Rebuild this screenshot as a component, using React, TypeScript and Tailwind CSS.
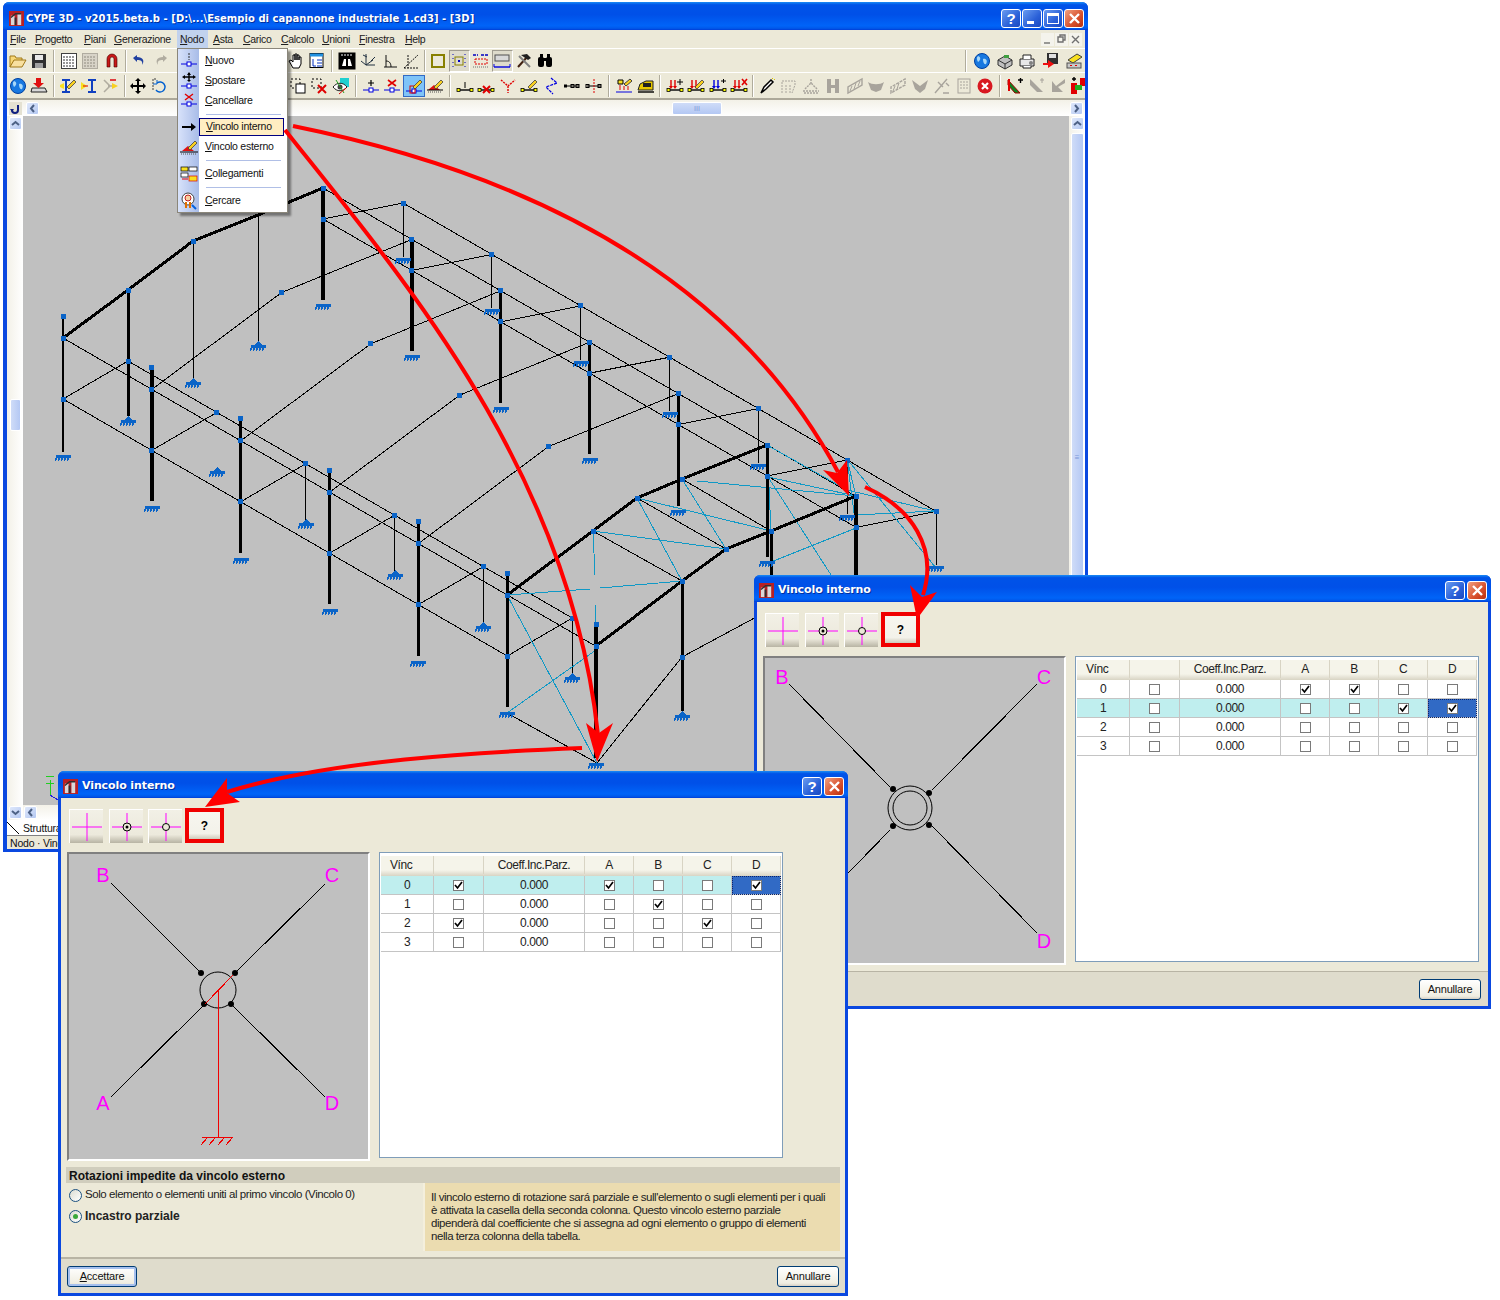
import React from 'react';

const XP = "bg-[linear-gradient(180deg,#1a8cf5_0%,#0053e8_10%,#0050e8_45%,#0064f8_85%,#0058ea_94%,#003dd7_100%)]";
const FONT = "font-['Liberation_Sans',Arial,sans-serif]";
const TITLEFONT = "font-['DejaVu_Sans',sans-serif]";

const Logo = () => (
  <svg width="15" height="15" viewBox="0 0 16 16" className="shrink-0">
    <rect width="16" height="16" fill="#b82024" />
    <rect x="2" y="5" width="4" height="10" fill="#d8d8d8" />
    <rect x="9" y="3" width="4" height="12" fill="#d8d8d8" />
    <path d="M2 7 L7 3 L13 3" stroke="#303030" strokeWidth="1.5" fill="none" />
    <rect x="6" y="7" width="2" height="8" fill="#303030" />
  </svg>
);

const TitleBtn = ({ kind }: { kind: 'help' | 'min' | 'max' | 'close' }) => (
  <div className={`w-[20px] h-[19px] rounded-[3px] border border-white flex items-center justify-center text-white font-bold text-[15px] leading-none ${kind === 'close' ? 'bg-[linear-gradient(135deg,#f0a080,#d8502c_60%,#b83010)]' : 'bg-[linear-gradient(135deg,#6a9cf0,#2a60d8_60%,#1a48c0)]'}`}>
    {kind === 'help' && <span>?</span>}
    {kind === 'min' && <div className="w-[7px] h-[3px] bg-white mt-[8px] mr-[3px]" />}
    {kind === 'max' && <div className="w-[12px] h-[11px] border border-white border-t-[3px]" />}
    {kind === 'close' && (
      <svg width="13" height="13" viewBox="0 0 13 13"><path d="M2 2 L11 11 M11 2 L2 11" stroke="#fff" strokeWidth="2.4" /></svg>
    )}
  </div>
);

/* ---------- toolbar icons ---------- */
const B = '#0000e0';
const nodeLine = (y = 13) => (
  <>
    <path d={`M1 ${y}H17`} stroke={B} strokeWidth="1" />
    <rect x="7" y={y - 2} width="4" height="4" fill="#fff" stroke={B} />
  </>
);
const barEnds = (
  <>
    <path d="M3 13H15" stroke="#000" strokeWidth="1.4" />
    <rect x="1" y="11.5" width="3" height="3" fill="#ff0" stroke="#000" strokeWidth="0.8" />
    <rect x="14" y="11.5" width="3" height="3" fill="#ff0" stroke="#000" strokeWidth="0.8" />
  </>
);
const pencil = <path d="M8 10 L15 3 L17 5 L10 12 Z" fill="#f8d020" stroke="#404040" strokeWidth="0.8" />;
const loads = (c = '#e00000') => (
  <>
    <path d="M5 3V10M9 3V10" stroke={c} strokeWidth="1.4" />
    <path d="M3 9L5 12L7 9M7 9L9 12L11 9" fill={c} />
    {barEnds}
  </>
);
const gray = '#a8a49c';
const icons: Record<string, React.ReactNode> = {
  folder: (<><path d="M1 15V4h5l1 2h6v3H5z" fill="#f8d878" stroke="#a07818" /><path d="M1 15L5 8h12l-4 7z" fill="#f8e0a0" stroke="#a07818" /></>),
  save: (<><rect x="2" y="2" width="14" height="14" fill="#303030" /><rect x="5" y="3" width="8" height="5" fill="#e8e8e8" /><rect x="5" y="11" width="8" height="5" fill="#a0a0a0" /></>),
  kkf: (<><rect x="1.5" y="1.5" width="15" height="15" fill="#fff" stroke="#404040" /><path d="M3 5H15M3 8H15M3 11H15M3 14H15" stroke="#303030" strokeDasharray="2 1" /></>),
  kkfGray: (<><rect x="1.5" y="1.5" width="15" height="15" fill="#d8d4c8" stroke="#b0aca0" /><path d="M3 5H15M3 8H15M3 11H15M3 14H15" stroke="#908c80" strokeDasharray="2 1" /></>),
  magnet: (<path d="M4 15V7a5 5 0 0 1 10 0V15H11V7a2 2 0 0 0-4 0V15Z" fill="#c81818" stroke="#400" strokeWidth="0.6" />),
  undo: <path d="M3 6 L7 3 V5 C13 5 15 9 12 13 C13 9 11 8 7 8 V10Z" fill="#2040a0" />,
  redo: <path d="M15 6 L11 3 V5 C5 5 3 9 6 13 C5 9 7 8 11 8 V10Z" fill="#b0aca0" />,
  hand: <path d="M6 16 L2 9 L4 8 L6 10 V3 H8 V8 V2 H10 V8 V3 H12 V8 V5 H14 V12 L12 16Z" fill="#fff" stroke="#000" strokeWidth="1" />,
  doc: (<><rect x="2" y="1.5" width="13" height="14" fill="#fff" stroke="#000" /><rect x="2" y="1.5" width="13" height="3" fill="#2090e0" /><path d="M5 7v7h3M9 8h5M9 11h5M9 14h5" stroke="#0030c0" fill="none" /></>),
  binGrid: (<><rect x="0.5" y="0.5" width="17" height="17" fill="#000" /><path d="M3 3H15" stroke="#fff" strokeDasharray="2 1" /><path d="M4 14L6 7H8V14ZM14 14L12 7H10V14Z" fill="#fff" /></>),
  axis: <path d="M7 2 L7 13 L2 9 M7 13 L16 13 M7 13 L14 8 M4 3 L8 5 M12 9L16 5" stroke="#203040" fill="none" />,
  angle: <path d="M3 15H16 M5 15V3 M5 9 C9 9 10 12 10 15" stroke="#101010" fill="none" />,
  dashAngle: <path d="M2 16 L16 3 M2 16H16 M6 3V16" stroke="#101010" strokeDasharray="2 1" fill="none" />,
  olive: <rect x="3" y="3" width="12" height="12" fill="none" stroke="#888000" strokeWidth="2" />,
  dotRect: (<><rect x="5" y="5" width="8" height="8" fill="none" stroke="#888000" /><rect x="8" y="8" width="2" height="2" fill="#0000c0" /><path d="M3 2V16M15 2V16" stroke="#0000c0" strokeDasharray="1 3" /></>),
  dashRed: (<><path d="M1 3H6 M9 3H17" stroke="#0000c0" strokeWidth="1.5" strokeDasharray="3 1" /><rect x="3" y="7" width="12" height="5" fill="none" stroke="#e00000" strokeDasharray="2 1" /><path d="M1 15H17" stroke="#707070" strokeDasharray="1 1" /></>),
  rectLine: (<><rect x="2" y="3" width="14" height="6" fill="#d8d8d8" stroke="#505050" /><path d="M1 15H17" stroke="#0000e0" strokeWidth="1.4" /><path d="M1 12V15M17 12V15" stroke="#0000e0" /></>),
  hammer: (<><path d="M3 15L13 4" stroke="#402010" strokeWidth="2" /><path d="M6 3L12 2L16 6L13 8Z" fill="#202020" /><path d="M4 4L15 15" stroke="#808080" strokeWidth="2" /></>),
  bino: (<><rect x="2" y="5" width="6" height="10" rx="2" fill="#000" /><rect x="10" y="5" width="6" height="10" rx="2" fill="#000" /><rect x="7" y="6" width="4" height="3" fill="#000" /><rect x="4" y="2" width="3" height="4" fill="#000" /><rect x="11" y="2" width="3" height="4" fill="#000" /></>),
  globe: (<><circle cx="9" cy="9" r="7.5" fill="#1878e0" stroke="#0040a0" /><path d="M5 4C8 5 8 8 5 10C4 8 3 6 5 4ZM10 7C13 6 15 9 13 12C11 13 10 10 10 7Z" fill="#a8d8f8" /></>),
  box: (<><path d="M2 8L9 4L16 8V13L9 17L2 13Z" fill="#c0c0c0" stroke="#303030" /><path d="M2 8L9 12L16 8M9 12V17" stroke="#303030" fill="none" /><rect x="8" y="3" width="5" height="3" fill="#40a040" /></>),
  printer: (<><path d="M2 7H16V14H2Z" fill="#e8e8e8" stroke="#202020" /><path d="M5 7V3H13V7M5 14V16H13V14" fill="#fff" stroke="#202020" /><circle cx="13" cy="11" r="2" fill="#808080" /></>),
  saveRed: (<><rect x="5" y="1" width="11" height="11" fill="#303030" /><rect x="7" y="2" width="7" height="4" fill="#e0e0e0" /><path d="M1 11H6V8L12 12L6 16V13H1Z" fill="#f01010" /></>),
  yellowBox: (<><path d="M3 8L12 2L17 5L8 11Z" fill="#f8e020" stroke="#404040" /><rect x="2" y="11" width="14" height="5" fill="#c8c8c8" stroke="#505050" /><path d="M5 13.5H7M10 13.5H12" stroke="#e00000" /></>),
  printDown: (<><path d="M2 11H15L17 15H1Z" fill="#d8d8d8" stroke="#202020" /><path d="M6 1H11V6H14L8.5 11L3 6H6Z" fill="#e01010" /></>),
  ibeamY: (<><path d="M3 3H11M3 15H11M7 3V15" stroke="#1040c0" strokeWidth="2" /><path d="M1 8L5 6V12L1 10Z" fill="#f8e020" />{pencil}</>),
  ibeamB: (<><path d="M8 3H16M8 15H16M12 3V15" stroke="#1040c0" strokeWidth="2" /><path d="M1 5L7 9L1 13Z" fill="#f8e020" /><path d="M3 9H8" stroke="#e00000" /></>),
  arrowsFaded: (<><path d="M2 3L8 9L2 15M6 9H14" stroke="#b0aca0" fill="none" strokeWidth="1.5" /><path d="M10 6L16 9L10 12Z" fill="#f8d020" /><path d="M8 3H14" stroke="#e04040" strokeWidth="2" /></>),
  move: <path d="M9 1L12 4H10V8H14V6L17 9L14 12V10H10V14H12L9 17L6 14H8V10H4V12L1 9L4 6V8H8V4H6Z" fill="#000" />,
  rotate: (<><path d="M5 2H2V14" stroke="#404040" fill="none" strokeDasharray="2 1" /><path d="M6 6A5 5 0 1 1 5 13" stroke="#0060d0" fill="none" strokeWidth="1.4" /><path d="M6 3V7H2" stroke="#0060d0" fill="none" /></>),
  dashRect: (<><rect x="2" y="2" width="9" height="9" fill="none" stroke="#000" strokeDasharray="2 2" /><rect x="7" y="7" width="9" height="9" fill="#fff" stroke="#000" /></>),
  dashX: (<><rect x="2" y="2" width="9" height="9" fill="none" stroke="#000" strokeDasharray="2 2" /><path d="M8 8L16 16M16 8L8 16" stroke="#e00000" strokeWidth="2" /></>),
  eye: (<><rect x="8" y="1" width="9" height="9" fill="#20d0d0" /><path d="M1 10C5 5 11 5 15 10C11 15 5 15 1 10Z" fill="#fff" stroke="#202020" /><circle cx="8" cy="10" r="2.5" fill="#404040" /><path d="M4 3L12 16" stroke="#20a020" /><path d="M7 17L14 11" stroke="#e00000" /></>),
  nodePlus: (<><path d="M9 3V9M6 6H12" stroke="#000" strokeWidth="1.2" />{nodeLine()}</>),
  nodeX: (<><path d="M5 3L13 9M13 3L5 9" stroke="#e00000" strokeWidth="1.6" />{nodeLine()}</>),
  nodePencil: (<>{nodeLine(14)}<rect x="5" y="9" width="5" height="7" fill="none" stroke="#e00000" />{pencil}</>),
  basePencil: (<><path d="M2 13L8 8L14 13Z" fill="#e01010" /><path d="M1 13H17" stroke="#000" /><path d="M2 15H16" stroke="#505050" strokeDasharray="1 1" />{pencil}</>),
  barNode: (<><path d="M9 5V11" stroke="#000" />{barEnds}</>),
  barX: (<>{barEnds}<path d="M6 9L13 16M13 9L6 16" stroke="#e00000" strokeWidth="2" /></>),
  redY: (<path d="M2 3L9 9L16 3M9 9V16" stroke="#e00000" fill="none" strokeDasharray="2 1" strokeWidth="1.4" />),
  barPencil: (<>{barEnds}{pencil}</>),
  blueZ: (<path d="M9 1L15 6L4 10L11 17" stroke="#0000e0" fill="none" strokeWidth="1.2" strokeDasharray="3 1" />),
  barDots: (<><path d="M2 9H16" stroke="#000" /><rect x="1" y="7.5" width="3" height="3" fill="#000" /><rect x="8" y="7.5" width="3" height="3" fill="none" stroke="#000" /><rect x="13" y="7.5" width="3" height="3" fill="none" stroke="#000" /></>),
  barRed: (<><path d="M2 9H16" stroke="#000" /><rect x="1" y="7.5" width="3" height="3" fill="none" stroke="#000" /><rect x="13" y="7.5" width="3" height="3" fill="none" stroke="#000" /><path d="M9 2V16" stroke="#e00000" strokeDasharray="2 1" /></>),
  loadGrid: (<><path d="M3 3H8V7H3Z" fill="#f8e020" stroke="#000" /><path d="M9 7L15 2L17 4L11 9Z" fill="#f8d020" stroke="#404040" /><path d="M5 8V13M9 9V13M13 9V13" stroke="#e00000" /><path d="M1 15H17" stroke="#0000e0" /></>),
  yellowBox2: (<><path d="M3 7L9 4H16V13H1L3 7Z" fill="#e8c800" stroke="#202020" /><rect x="6" y="6" width="8" height="4" fill="#202020" /><path d="M1 15H17" stroke="#000" strokeWidth="1.4" /></>),
  loadPlus: (<>{loads()}<path d="M14 2V8M11 5H17" stroke="#000" /></>),
  loadPencil: (<>{loads()}{pencil}</>),
  loadMove: (<>{loads('#0000e0')}<path d="M12 4H17M14.5 2V6" stroke="#000" /></>),
  loadX: (<>{loads()}<path d="M12 2L17 8M17 2L12 8" stroke="#e00000" strokeWidth="1.6" /></>),
  pen: (<><path d="M3 16L6 10L13 3L15 5L8 12Z" fill="#fff" stroke="#000" strokeWidth="1.5" /><path d="M14 1L15 2M17 2L16 3" stroke="#d8c800" /></>),
  g1: <path d="M2 16V4H15V8L12 16M6 16V8M10 8V16" stroke={gray} strokeDasharray="2 1" fill="none" />,
  g2: <path d="M9 2V6M3 12L9 6L15 12M1 14H17M2 16H16" stroke={gray} strokeWidth="1.4" fill="none" strokeDasharray="2 1" />,
  g3: <path d="M3 2H7V8H11V2H15V16H11V11H7V16H3Z" fill={gray} />,
  g4: (<><path d="M2 16V10L16 2V8Z" fill="none" stroke={gray} strokeWidth="1.4" /><path d="M4 14L6 9M8 12L10 6M12 9L14 4" stroke={gray} /></>),
  g5: <path d="M1 5C5 8 13 8 17 5L14 13L9 15L4 13Z" fill={gray} />,
  g6: (<><path d="M2 16V10L16 2V8Z" fill="none" stroke={gray} strokeWidth="1.4" strokeDasharray="3 1" /><path d="M4 14L6 9M8 12L10 6" stroke={gray} /></>),
  g7: <path d="M1 3L9 9L17 3L14 12L9 16L4 12Z" fill={gray} />,
  g8: <path d="M2 16L14 2M5 5L10 10M10 16H16M13 6L16 9" stroke={gray} strokeWidth="1.4" fill="none" />,
  g9: (<><rect x="3" y="2" width="12" height="14" fill="none" stroke={gray} /><path d="M5 5H13M5 8H13M5 11H13" stroke={gray} strokeDasharray="2 1" /></>),
  redX: (<><circle cx="9" cy="9" r="7.5" fill="#d81820" /><path d="M6 6L12 12M12 6L6 12" stroke="#fff" strokeWidth="2.2" /></>),
  rg1: (<><path d="M2 3L14 16H9L2 8Z" fill="#108020" stroke="#a00000" /><path d="M3 2V14" stroke="#e00000" strokeWidth="2" /><path d="M12 3H17M14.5 1V6" stroke="#000" strokeWidth="1.4" /></>),
  gr2: (<><path d="M3 2L16 15H10L3 8Z" fill={gray} /><path d="M13 3H17M15 1V6" stroke={gray} /></>),
  gr3: <path d="M16 2V6L9 10L14 15H3V4L7 9Z" fill={gray} />,
  rg2: (<><rect x="1" y="6" width="6" height="11" fill="#e00000" /><rect x="10" y="1" width="7" height="8" fill="#e00000" /><rect x="5" y="8" width="7" height="5" fill="#20b020" /><path d="M2 2H6M4 0V4" stroke="#000" strokeWidth="1.4" /></>),
};

const Icon = ({ n, st, w, x }: { n: string; st?: 'pressed' | 'sel'; w?: boolean; x?: boolean }) => (
  <div className={`${w ? 'w-[26px]' : x ? 'w-[21.8px]' : 'w-[21.5px]'} h-[22px] shrink-0 flex items-center justify-center ${st === 'pressed' ? 'bg-[#dedbcb] border border-t-[#a09c90] border-l-[#a09c90] border-b-white border-r-white' : st === 'sel' ? 'bg-[#7fc4f8] border border-[#316ac5]' : ''}`}>
    <svg width="18" height="18" viewBox="0 0 18 18" shapeRendering="geometricPrecision">{icons[n]}</svg>
  </div>
);
const Sep = ({ c }: { c: string }) => (
  <div className={`${c} h-[22px] shrink-0 flex justify-center`}>
    <div className="w-[2px] h-full border-l border-[#b0ac9c] border-r-0 bg-white" />
  </div>
);

const MenuBarItems = [
  { t: 'File', c: 'w-[28px] pl-[3px]' },
  { t: 'Progetto', c: 'w-[49px]' },
  { t: 'Piani', c: 'w-[30px]' },
  { t: 'Generazione', c: 'w-[63px]' },
  { t: 'Nodo', c: 'w-[31px] pl-[3px] bg-[#c1d2ee] h-[18px] mr-[5px]' },
  { t: 'Asta', c: 'w-[30px]' },
  { t: 'Carico', c: 'w-[38px]' },
  { t: 'Calcolo', c: 'w-[41px]' },
  { t: 'Unioni', c: 'w-[37px]' },
  { t: 'Finestra', c: 'w-[46px]' },
  { t: 'Help', c: 'w-[30px]' },
];

const Und = ({ t }: { t: string }) => (<><u>{t[0]}</u>{t.slice(1)}</>);

/* ---------- structure ---------- */
const dx = 88.85, dy = 51.4;
const off = (p: number[], k: number) => [p[0] + dx * k, p[1] + dy * k];
const E0 = [63, 338], C0 = [63, 399], P0 = [128, 361], R1 = [193, 241], R2 = [323, 188], R3 = [323, 219], Q = [403, 203];
const seq = [0, 1, 2, 3, 4, 5, 6];
const NB = '#0a64c8';

const L = ({ a, b, w = 1, c = '#000' }: { a: number[]; b: number[]; w?: number; c?: string }) => (
  <line x1={a[0]} y1={a[1]} x2={b[0]} y2={b[1]} stroke={c} strokeWidth={w} />
);
const Node = ({ p, s = 5 }: { p: number[]; s?: number }) => (
  <rect x={Math.round(p[0] - s / 2)} y={Math.round(p[1] - s / 2)} width={s} height={s} fill={NB} />
);
const Base = ({ p, peak }: { p: number[]; peak?: boolean }) => {
  const [x, y] = [Math.round(p[0]), Math.round(p[1])];
  return (
    <g>
      {peak && <path d={`M${x - 5} ${y}L${x} ${y - 5}L${x + 5} ${y}Z`} fill={NB} />}
      <path d={`M${x - 7} ${y}H${x + 8}`} stroke={NB} strokeWidth="3" />
      {[-6, -3, 0, 3, 6].map((d) => (
        <path key={d} d={`M${x + d} ${y}l-1.5 5`} stroke={NB} strokeWidth="1.6" />
      ))}
    </g>
  );
};
const Poly = ({ pts, w }: { pts: number[][]; w: number }) => (
  <polyline points={pts.map((p) => p.join(',')).join(' ')} fill="none" stroke="#000" strokeWidth={w} />
);

const cyan: number[][] = [
  [507, 595, 590, 589], [600, 588, 682, 581], [593, 531, 726, 549], [593, 531, 595, 575], [595, 604, 596, 646],
  [507, 595, 597, 763], [596, 650, 507, 713], [637, 498, 682, 581], [682, 479, 726, 549], [637, 498, 771, 531],
  [697, 481, 856, 496], [767, 445, 771, 531], [768, 477, 856, 496], [767, 445, 847, 490], [847, 490, 935, 511],
  [847, 459, 856, 496], [847, 459, 856, 528], [847, 459, 936, 568], [768, 477, 833, 578], [856, 528, 771, 562], [855, 515, 935, 511],
];

const Structure = () => (
  <svg className="absolute inset-0 w-full h-full" viewBox="23 116 1046 689" preserveAspectRatio="xMinYMin slice" shapeRendering="crispEdges">
    {/* thin longitudinal */}
    <L a={E0} b={off(E0, 6)} />
    <L a={C0} b={off(C0, 5)} />
    <L a={P0} b={off(P0, 5)} />
    <L a={R2} b={off(R2, 6)} />
    <L a={R3} b={off(R3, 6)} />
    <L a={Q} b={off(Q, 6)} />
    <L a={[507, 713]} b={[597, 763]} />
    <L a={[597, 763]} b={[682, 657]} />
    <L a={[682, 657]} b={[760, 615]} />
    {seq.slice(0, 6).map((k) => <L key={k} a={off(C0, k)} b={off(P0, k)} />)}
    {seq.map((k) => <L key={k} a={off(R3, k)} b={off(Q, k)} />)}
    {[1, 2, 3, 4].map((k) => <Poly key={k} pts={[off(E0, k), off(R1, k), off(R2, k)]} w={1} />)}
    {seq.map((k) => <L key={k} a={off(Q, k)} b={[Q[0] + dx * k, Q[1] + dy * k + 54]} w={1} />)}
    {[2, 3, 4, 5].map((k) => <L key={k} a={off(P0, k)} b={[P0[0] + dx * k, P0[1] + dy * k + 56]} />)}
    <L a={[193, 241]} b={[193, 378]} />
    <L a={[258, 215]} b={[258, 342]} />
    <L a={[63, 316]} b={[63, 452]} w={2} />
    <L a={[593, 531]} b={[682, 581]} />
    <L a={[637, 498]} b={[726, 549]} />
    <L a={[682, 479]} b={[771, 531]} />
    {/* cyan */}
    {cyan.map((s, i) => <L key={i} a={[s[0], s[1]]} b={[s[2], s[3]]} c="#1099c6" />)}
    {/* thick columns */}
    <L a={[128, 290]} b={[128, 416]} w={3} />
    {[1, 2, 3, 4, 5, 6].map((k) => <L key={k} a={[E0[0] + dx * k, E0[1] + dy * k - 20]} b={[E0[0] + dx * k, E0[1] + dy * k + 112]} w={3.5} />)}
    {seq.map((k) => <L key={k} a={off(R2, k)} b={[R2[0] + dx * k, R2[1] + dy * k + 112]} w={3.5} />)}
    <L a={[682, 581]} b={[682, 711]} w={3} />
    <L a={[771, 531]} b={[771, 600]} w={3} />
    {/* rafters */}
    <Poly pts={[[63, 338], [128, 290], [193, 241], [258, 215], [323, 188]]} w={3} />
    <Poly pts={[[507, 595], [593, 531], [637, 498], [682, 479], [767, 445]]} w={3} />
    <Poly pts={[[596, 646], [682, 581], [726, 549], [771, 531], [856, 496]]} w={3} />
    {/* nodes */}
    {seq.map((k) => (
      <g key={k}>
        <Node p={off(E0, k)} /><Node p={[E0[0] + dx * k, E0[1] + dy * k - 22]} />
        {k < 6 && <Node p={off(C0, k)} />}
        {k < 6 && <Node p={off(P0, k)} />}
        <Node p={off(R1, k)} /><Node p={off(R2, k)} /><Node p={off(R3, k)} /><Node p={off(Q, k)} />
        <Base p={[Q[0] + dx * k, Q[1] + dy * k + 56]} />
        <Base p={[R2[0] + dx * k, R2[1] + dy * k + 117]} />
        <Base p={[E0[0] + dx * k, E0[1] + dy * k + 118]} />
        {k < 6 && <Base p={[P0[0] + dx * k, P0[1] + dy * k + 60]} peak />}
      </g>
    ))}
    <Base p={[193, 383]} peak />
    <Base p={[258, 346]} peak />
    <Base p={[682, 716]} peak />
    {[[128, 290], [593, 531], [637, 498], [682, 479], [682, 581], [726, 549], [771, 531], [682, 657]].map((p, i) => <Node key={i} p={p} />)}
    {/* axis mark */}
    <path d="M50 795V780M46 776H54M46 783H54" stroke="#20d020" strokeWidth="1" />
    <path d="M50 795L58 800" stroke="#2020e0" />
  </svg>
);

/* ---------- dropdown ---------- */
const menuIcon: Record<string, React.ReactNode> = {
  n: (<><path d="M9 1V8" stroke="#303030" strokeDasharray="2 1" />{nodeLine(12)}</>),
  s: (<><path d="M9 1V8M5 5H13" stroke="#000" strokeWidth="1.4" /><path d="M2 5L5 3V7ZM16 5L13 3V7ZM7 3L9 0L11 3ZM7 8L9 10L11 8Z" fill="#000" />{nodeLine(14)}</>),
  c: (<><path d="M5 2L13 8M13 2L5 8" stroke="#e00000" strokeWidth="1.4" />{nodeLine(12)}</>),
  a: <path d="M2 8H11V5L16 9L11 13V10H2Z" fill="#000" />,
  e: (<><path d="M2 13L8 8L14 13Z" fill="#e01010" /><path d="M0 14H18" stroke="#000" /><path d="M1 16H17" stroke="#505050" strokeDasharray="1 1" />{pencil}</>),
  k: (<><rect x="1" y="2" width="7" height="4" fill="#f8e020" stroke="#000" strokeWidth="0.7" /><rect x="9" y="2" width="8" height="4" fill="#fff" stroke="#000" strokeWidth="0.7" /><rect x="1" y="8" width="7" height="4" fill="#fff" stroke="#000" strokeWidth="0.7" /><rect x="9" y="11" width="8" height="5" fill="#f8e020" stroke="#e00000" strokeWidth="0.7" /><path d="M2 14H8" stroke="#e00000" /></>),
  r: (<><circle cx="8" cy="7" r="6" fill="#fff" stroke="#404040" /><circle cx="8" cy="6" r="3" fill="#f8d0a0" stroke="#c02020" /><path d="M6 10V16M10 10V16" stroke="#e07000" strokeWidth="2" /><path d="M12 13L16 17" stroke="#0060e0" strokeWidth="2" /></>),
};
const MenuRow = ({ t, k, h, sel }: { t: string; k: string; h: string; sel?: boolean }) => (
  <div className={`${h} flex items-center`}>
    <div className="w-[21px] h-full flex items-center justify-center shrink-0">
      <svg width="18" height="18" viewBox="0 0 18 18">{menuIcon[k]}</svg>
    </div>
    <div className={`flex-1 h-full flex items-center pl-[6px] text-[10.5px] tracking-[-0.25px] text-[#111] mr-[3px] ${sel ? 'bg-[#ffeec2] border border-[#000080]' : ''}`}>
      <Und t={t} />
    </div>
  </div>
);
const MenuSep = ({ h }: { h: string }) => (
  <div className={`${h} flex items-center pl-[28px] pr-[6px]`}>
    <div className="h-px w-full bg-[#b0bfe6]" />
  </div>
);
const Dropdown = () => (
  <div className="absolute left-[177px] top-[48px] w-[111px] h-[165px] z-10 bg-white border border-[#8a867a] shadow-[3px_3px_2px_rgba(0,0,0,0.4)] pt-[2px]">
    <div className="absolute left-0 top-0 bottom-0 w-[21px] bg-[linear-gradient(90deg,#d8e2fa,#a8bce8)]" />
    <div className="relative">
      <MenuRow t="Nuovo" k="n" h="h-[20px]" />
      <MenuRow t="Spostare" k="s" h="h-[20px]" />
      <MenuRow t="Cancellare" k="c" h="h-[20px]" />
      <MenuSep h="h-[7px]" />
      <MenuRow t="Vincolo interno" k="a" h="h-[18px]" sel />
      <div className="h-[1px]" />
      <MenuRow t="Vincolo esterno" k="e" h="h-[20px]" />
      <MenuSep h="h-[7px]" />
      <MenuRow t="Collegamenti" k="k" h="h-[20px]" />
      <MenuSep h="h-[7px]" />
      <MenuRow t="Cercare" k="r" h="h-[20px]" />
    </div>
  </div>
);

const ScrollBtn = ({ d }: { d: 'l' | 'r' | 'u' | 'm' }) => (
  <div className="w-[13px] h-[13px] rounded-[2px] shrink-0 bg-[linear-gradient(135deg,#dfe8fb,#b4c8f2)] border border-white flex items-center justify-center">
    <svg width="9" height="9" viewBox="0 0 9 9">
      <path d={d === 'l' ? 'M6 1L3 4.5L6 8' : d === 'r' ? 'M3 1L6 4.5L3 8' : d === 'u' ? 'M1 6L4.5 3L8 6' : 'M1 3L4.5 6L8 3'} fill="none" stroke="#4d6185" strokeWidth="2" />
    </svg>
  </div>
);

/* ---------- main window ---------- */
const MainWindow = () => (
  <div className="absolute left-[3px] top-[2px] w-[1085px] h-[850px] bg-[#0a48e0] rounded-t-[6px] flex flex-col pl-[4px] pr-[3px] pb-[3px]">
    <div className={`${XP} h-[28px] -ml-[4px] -mr-[3px] rounded-t-[6px] flex items-center pl-[6px] pr-[4px] pt-[4px] shrink-0`}>
      <Logo />
      <div className={`${TITLEFONT} ml-[2px] text-white font-bold text-[10px] tracking-[0.04px] whitespace-pre flex-1 [text-shadow:1px_1px_0_#0030a0]`}>
        CYPE 3D - v2015.beta.b - [D:\...\Esempio di capannone industriale 1.cd3] - [3D]
      </div>
      <div className="flex gap-[1px]">
        <TitleBtn kind="help" /><TitleBtn kind="min" /><TitleBtn kind="max" /><TitleBtn kind="close" />
      </div>
    </div>
    <div className="bg-[#ece9d8] flex-1 flex flex-col min-h-0">
      <div className="h-[18px] flex items-center shrink-0 text-[10.5px] tracking-[-0.3px] text-[#202020]">
        {MenuBarItems.map((m) => (
          <div key={m.t} className={`${m.c} flex items-center shrink-0 pt-[1px]`}><Und t={m.t} /></div>
        ))}
        <div className="flex-1" />
        <div className="flex gap-[1px] pr-[3px]">
          {['M3 10H9', 'M3 4H8V9H3Z M5 4V2H10V7H8', 'M3 3L10 10M10 3L3 10'].map((d) => (
            <div key={d} className="w-[13px] h-[13px] bg-[#f4f3ec] flex items-center justify-center">
              <svg width="13" height="13" viewBox="0 0 13 13"><path d={d} fill="none" stroke="#707070" strokeWidth="1.4" /></svg>
            </div>
          ))}
        </div>
      </div>
      <div className="h-[24px] flex items-center shrink-0 border-t border-white">
        {['folder', 'save'].map((n) => <Icon key={n} n={n} />)}
        <Sep c="w-[8px]" />
        {['kkf', 'kkfGray', 'magnet'].map((n) => <Icon key={n} n={n} />)}
        <Sep c="w-[6px]" />
        {['undo', 'redo'].map((n) => <Icon key={n} n={n} />)}
        <div className="w-[113.5px] shrink-0" />
        {['hand', 'doc'].map((n) => <Icon key={n} n={n} />)}
        <Sep c="w-[8px]" />
        {['binGrid', 'axis', 'angle', 'dashAngle'].map((n) => <Icon key={n} n={n} />)}
        <Sep c="w-[5px]" />
        <Icon n="olive" /><Icon n="dotRect" st="pressed" /><Icon n="dashRed" /><Icon n="rectLine" st="pressed" /><Icon n="hammer" /><Icon n="bino" />
        <div className="flex-1" />
        <Sep c="w-[6px]" />
        <Icon n="globe" w /><Icon n="box" /><Icon n="printer" /><Icon n="saveRed" w /><Icon n="yellowBox" />
      </div>
      <div className="h-[26px] flex items-center shrink-0 border-t border-white overflow-hidden">
        {['globe', 'printDown'].map((n) => <Icon key={n} n={n} />)}
        <Sep c="w-[7px]" />
        {['ibeamY', 'ibeamB', 'arrowsFaded'].map((n) => <Icon key={n} n={n} />)}
        <Sep c="w-[6px]" />
        {['move', 'rotate'].map((n) => <Icon key={n} n={n} />)}
        <div className="w-[116.5px] shrink-0" />
        {['dashRect', 'dashX', 'eye'].map((n) => <Icon key={n} n={n} />)}
        <Sep c="w-[8.5px]" />
        <Icon n="nodePlus" /><Icon n="nodeX" /><Icon n="nodePencil" st="sel" /><Icon n="basePencil" />
        <Sep c="w-[8px]" />
        {['barNode', 'barX', 'redY', 'barPencil', 'blueZ', 'barDots', 'barRed'].map((n) => <Icon key={n} n={n} />)}
        <Sep c="w-[9px]" />
        {['loadGrid', 'yellowBox2'].map((n) => <Icon key={n} n={n} />)}
        <Sep c="w-[7.5px]" />
        {['loadPlus', 'loadPencil', 'loadMove', 'loadX'].map((n) => <Icon key={n} n={n} />)}
        <Sep c="w-[6.5px]" />
        {['pen', 'g1', 'g2', 'g3', 'g4', 'g5', 'g6', 'g7', 'g8', 'g9', 'redX'].map((n) => <Icon key={n} n={n} x />)}
        <Sep c="w-[7.5px]" />
        {['rg1', 'gr2', 'gr3', 'rg2'].map((n) => <Icon key={n} n={n} />)}
      </div>
      <div className="h-[2px] bg-[#aca899] shrink-0" />
      <div className="h-[16px] flex items-center shrink-0 bg-[linear-gradient(180deg,#f3f1e8,#ffffff)]">
        <div className="w-[17px] h-full flex items-center justify-center">
          <svg width="13" height="13" viewBox="0 0 13 13"><rect width="13" height="13" fill="#e4e1d2" /><path d="M9 3V8A3 3 0 0 1 3 8" stroke="#102080" strokeWidth="2" fill="none" /><path d="M1 7L3 10L5 7Z" fill="#102080" /></svg>
        </div>
        <div className="ml-[2px]"><ScrollBtn d="l" /></div>
        <div className="flex-1 relative h-full" />
        <div className="absolute left-[669px] top-[100px] w-[50px] h-[13px] rounded-[2px] bg-[linear-gradient(180deg,#cfdcf8,#b4c8f4)] border border-white flex items-center justify-center text-[#7a96d8] text-[7px] leading-none">III</div>
        <div className="mr-[2px]"><ScrollBtn d="r" /></div>
      </div>
      <div className="flex-1 flex min-h-0">
        <div className="w-[16px] shrink-0 flex flex-col items-center bg-[linear-gradient(90deg,#f3f1e8,#ffffff)] relative pt-[1px]">
          <ScrollBtn d="u" />
          <div className="absolute left-[3px] top-[283px] w-[11px] h-[32px] rounded-[2px] bg-[linear-gradient(90deg,#cfdcf8,#b4c8f4)] border border-white" />
          <div className="flex-1" />
          <div className="pb-[1px]"><ScrollBtn d="m" /></div>
        </div>
        <div className="flex-1 flex flex-col min-w-0">
          <div className="flex-1 relative bg-[#c0c0c0] overflow-hidden">
            <Structure />
          </div>
          <div className="h-[15px] shrink-0 bg-[linear-gradient(180deg,#f3f1e8,#ffffff)] flex items-center pl-[1px]">
            <ScrollBtn d="l" />
          </div>
        </div>
        <div className="w-[16px] shrink-0 flex flex-col items-center bg-[linear-gradient(90deg,#f3f1e8,#ffffff)] pt-[1px] relative">
          <ScrollBtn d="u" />
          <div className="mt-[3px] w-[13px] h-[650px] rounded-[2px] bg-[linear-gradient(90deg,#cfdcf8,#b4c8f4)] border border-white flex items-center justify-center text-[#7a96d8] text-[8px] leading-none">≡</div>
        </div>
      </div>
      <div className="h-[29px] shrink-0 bg-white flex flex-col">
        <div className="h-[15px] flex items-end relative">
          <svg width="14" height="13" viewBox="0 0 14 13" className="shrink-0"><path d="M0 0L12 12" stroke="#000" /></svg>
          <span className="ml-[2px] text-[10.5px] tracking-[-0.2px] leading-[13px] text-[#111]">Struttura</span>
        </div>
        <div className="h-px bg-[#808080]" />
        <div className="flex-1 bg-[#ece9d8] pl-[3px] text-[10.5px] tracking-[-0.2px] text-[#111] leading-[14px] whitespace-nowrap overflow-hidden">Nodo · Vincolo interno</div>
      </div>
    </div>
  </div>
);

/* ---------- dialog ---------- */
const Check = ({ on }: { on?: boolean }) => (
  <div className="w-[11px] h-[11px] bg-white border border-[#7a7a7a] flex items-center justify-center shrink-0">
    {on && <svg width="9" height="9" viewBox="0 0 9 9"><path d="M1 4L3.5 7L8 1" stroke="#000" strokeWidth="1.7" fill="none" /></svg>}
  </div>
);

const cols = ['Vínc', '', 'Coeff.Inc.Parz.', 'A', 'B', 'C', 'D'];
const GRID = 'grid grid-cols-[53px_50px_101px_49px_49px_49px_49px]';
type Row = { v: number[]; hi?: boolean; sel?: boolean };
const Table = ({ rows, h }: { rows: Row[]; h: string }) => (
  <div className={`w-[404px] ${h} bg-white border border-[#7f9db9] pt-[3px] pl-[1px] text-[12px] tracking-[-0.45px] text-[#222] shrink-0`}>
    <div className={`${GRID} w-[400px] h-[20px] bg-[linear-gradient(180deg,#f5f4ea_0%,#f5f4ea_70%,#d8d4c4_100%)]`}>
      {cols.map((c, i) => (
        <div key={i} className={`flex items-center ${i === 0 ? 'pl-[9px]' : 'justify-center'} border-r border-[#d8d4c4] h-[18px]`}>{c}</div>
      ))}
    </div>
    {rows.map((r, i) => (
      <div key={i} className={`${GRID} w-[400px] h-[19px] ${r.hi ? 'bg-[#bfeeee]' : ''}`}>
        <div className="flex items-center justify-center border-r border-b border-[#c4c4c4]">{i}</div>
        <div className="flex items-center justify-center border-r border-b border-[#c4c4c4]"><Check on={!!r.v[0]} /></div>
        <div className="flex items-center justify-center border-r border-b border-[#c4c4c4]">0.000</div>
        {[1, 2, 3, 4].map((c) => (
          <div key={c} className={`flex items-center justify-center border-r border-b border-[#c4c4c4] ${r.sel && c === 4 ? 'bg-[#316ac5] outline-1 outline-dotted outline-offset-[-1px] outline-[#0a246a]' : ''}`}><Check on={!!r.v[c]} /></div>
        ))}
      </div>
    ))}
  </div>
);

const ToolBtn = ({ k, c }: { k: number; c?: string }) => (
  <div className={`w-[34px] h-[34px] bg-[linear-gradient(180deg,#f2f0e6_0%,#ece9dc_75%,#b8b4a4_100%)] border-t border-l border-white flex items-center justify-center shrink-0 ${c ?? ''}`}>
    <svg width="32" height="30" viewBox="0 0 32 30">
      <path d="M1 15H31M16 1V29" stroke="#ff00ff" strokeWidth="1" />
      {k === 1 && <><circle cx="16" cy="15" r="4" fill="#ece9d8" stroke="#000" /><circle cx="16" cy="15" r="1.5" fill="#000" /></>}
      {k === 2 && <circle cx="16" cy="15" r="3.5" fill="#ece9d8" stroke="#000" />}
    </svg>
  </div>
);

const HelpBtn = () => (
  <div className="-ml-[2px] w-[39px] h-[35px] border-[4px] border-[#f00000] bg-[linear-gradient(180deg,#f7f6ef_0%,#f3f2ea_80%,#cfcbbb_100%)] flex items-center justify-center font-bold text-[12px] text-black shrink-0 -mt-px">?</div>
);

const Btn = ({ t, def }: { t: React.ReactNode; def?: boolean }) => (
  <div className={`h-[21px] rounded-[3px] border border-[#003c74] bg-[linear-gradient(180deg,#ffffff,#f0eee2_85%,#d6d0c5)] flex items-center justify-center text-[11px] tracking-[-0.2px] text-[#111] ${def ? 'w-[70px] shadow-[inset_0_0_0_2px_#a6c0ee]' : 'w-[62px]'}`}>{t}</div>
);

const Dialog = ({ pos, children, rows, preview, tableH }: { pos: string; children: React.ReactNode; rows: Row[]; preview: React.ReactNode; tableH: string }) => (
  <div className={`absolute ${pos} bg-[#0a48e0] rounded-t-[6px] flex flex-col px-[3px] pb-[3px]`}>
    <div className={`${XP} h-[27px] -mx-[3px] rounded-t-[6px] flex items-center pl-[5px] pr-[4px] pt-[4px] shrink-0`}>
      <Logo />
      <div className={`${TITLEFONT} ml-[4px] text-white font-bold text-[11px] tracking-[-0.1px] flex-1 [text-shadow:1px_1px_0_#0030a0]`}>Vincolo interno</div>
      <div className="flex gap-[2px]"><TitleBtn kind="help" /><TitleBtn kind="close" /></div>
    </div>
    <div className="flex-1 bg-[#ece9d8] flex flex-col min-h-0">
      <div className="flex gap-[5px] pl-[8px] pt-[11px] h-[54px] shrink-0">
        <ToolBtn k={0} c="mr-[1px]" /><ToolBtn k={1} /><ToolBtn k={2} /><HelpBtn />
      </div>
      <div className="flex pl-[6px] gap-[9px] shrink-0">
        <div className="w-[303px] h-[309px] bg-[#c0c0c0] border-2 border-t-[#808080] border-l-[#808080] border-b-white border-r-white relative shrink-0">
          {preview}
        </div>
        <Table rows={rows} h={tableH} />
      </div>
      {children}
    </div>
  </div>
);

const Lbl = ({ x, y, t }: { x: number; y: number; t: string }) => (
  <text x={x} y={y} fill="#ff00ff" fontSize="20" textAnchor="middle" fontFamily="Liberation Sans, sans-serif">{t}</text>
);
const dot = (x: number, y: number) => <circle key={`${x}-${y}`} cx={x} cy={y} r="3" fill="#000" />;

const Preview1 = (
  <svg className="absolute inset-0 w-full h-full" viewBox="69 854 299 305">
    <Lbl x={103} y={882} t="B" /><Lbl x={332} y={882} t="C" /><Lbl x={103} y={1110} t="A" /><Lbl x={332} y={1110} t="D" />
    <g stroke="#000" strokeWidth="1" shapeRendering="crispEdges">
      <line x1="111" y1="883" x2="199" y2="971" /><line x1="325" y1="884" x2="237" y2="971" />
      <line x1="111" y1="1097" x2="203" y2="1006" /><line x1="325" y1="1097" x2="233" y2="1006" />
    </g>
    <circle cx="218" cy="990" r="18" fill="none" stroke="#000" />
    {dot(201, 973)}{dot(235, 973)}{dot(204, 1004)}{dot(231, 1004)}
    <g stroke="#f00000" strokeWidth="1" shapeRendering="crispEdges">
      <line x1="205" y1="1004" x2="233" y2="975" />
      <line x1="218" y1="990" x2="218" y2="1137" />
      <line x1="202" y1="1137" x2="233" y2="1137" />
      {[208, 216, 225, 233].map((x) => <line key={x} x1={x} y1="1137" x2={x - 7} y2="1145" />)}
    </g>
  </svg>
);
const Preview2 = (
  <svg className="absolute inset-0 w-full h-full" viewBox="765 658 299 305">
    <Lbl x={782} y={684} t="B" /><Lbl x={1044} y={684} t="C" /><Lbl x={1044} y={948} t="D" /><Lbl x={782} y={948} t="A" />
    <g stroke="#000" strokeWidth="1" shapeRendering="crispEdges">
      <line x1="789" y1="684" x2="890" y2="787" /><line x1="1037" y1="684" x2="932" y2="790" />
      <line x1="790" y1="933" x2="890" y2="830" /><line x1="1037" y1="933" x2="932" y2="826" />
    </g>
    <circle cx="910" cy="808" r="22" fill="none" stroke="#000" />
    <circle cx="910" cy="808" r="17" fill="none" stroke="#000" />
    {dot(893, 789)}{dot(929, 793)}{dot(893, 826)}{dot(929, 825)}
  </svg>
);

const rows1: Row[] = [
  { v: [1, 1, 0, 0, 1], hi: true, sel: true },
  { v: [0, 0, 1, 0, 0] },
  { v: [1, 0, 0, 1, 0] },
  { v: [0, 0, 0, 0, 0] },
];
const rows2: Row[] = [
  { v: [0, 1, 1, 0, 0] },
  { v: [0, 0, 0, 1, 1], hi: true, sel: true },
  { v: [0, 0, 0, 0, 0] },
  { v: [0, 0, 0, 0, 0] },
];

const Radio = ({ on }: { on?: boolean }) => (
  <div className="w-[13px] h-[13px] rounded-full border border-[#1c5180] bg-[linear-gradient(135deg,#dcdcd2,#ffffff)] flex items-center justify-center shrink-0">
    {on && <div className="w-[5px] h-[5px] rounded-full bg-[#3aa83a]" />}
  </div>
);

/* ---------- arrows ---------- */
const Arrows = () => (
  <svg className="absolute inset-0 w-[1500px] h-[1300px] z-20 pointer-events-none" viewBox="0 0 1500 1300">
    <g fill="none" stroke="#ff0000" strokeWidth="4">
      <path d="M293 126C520 172 730 270 838 472" />
      <path d="M285 130C400 275 570 470 598 735" />
      <path d="M865 487C912 508 938 548 923 595" />
      <path d="M582 748C480 752 330 760 227 792" />
    </g>
    <g fill="#ff0000">
      <polygon points="849,496 823,470 837,473 847,460" />
      <polygon points="597,762 586,723 599,733 613,723" />
      <polygon points="917,619 910,585 922,597 937,592" />
      <polygon points="205,807 227,778 227,793 240,802" />
    </g>
  </svg>
);

export default function App() {
  return (
    <div className={`${FONT} relative w-[1500px] h-[1300px] bg-white overflow-hidden text-black`}>
      <MainWindow />
      <Dropdown />
      <Dialog pos="left-[754px] top-[575px] w-[737px] h-[434px] z-[5]" rows={rows2} preview={Preview2} tableH="h-[306px]">
        <div className="flex-1" />
        <div className="h-[35px] bg-[#dfdccc] border-t border-[#b8b4a4] flex items-center justify-end pr-[7px] shrink-0">
          <Btn t="Annullare" />
        </div>
      </Dialog>
      <Dialog pos="left-[58px] top-[771px] w-[790px] h-[525px] z-[6]" rows={rows1} preview={Preview1} tableH="h-[306px]">
        <div className="mx-[5px] mt-[6px] bg-[#d0cdbd] h-[16px] shrink-0 flex items-center pl-[3px] pt-[1px] font-bold text-[12px] text-[#111]">Rotazioni impedite da vincolo esterno</div>
        <div className="flex mx-[5px] h-[68px] shrink-0">
          <div className="w-[357px] flex flex-col pt-[5px] pl-[3px] text-[11.5px] tracking-[-0.43px] text-[#222]">
            <div className="flex items-center gap-[3px] h-[14px]"><Radio />Solo elemento o elementi uniti al primo vincolo (Vincolo 0)</div>
            <div className="flex items-center gap-[3px] h-[14px] mt-[7px] font-bold tracking-[0px] text-[12px]"><Radio on />Incastro parziale</div>
          </div>
          <div className="flex-1 bg-[#ebdcb0] border-l-2 border-[#f4efdc] pl-[6px] pt-[8px] text-[11.5px] leading-[13px] tracking-[-0.44px] text-[#222]">
            <div>Il vincolo esterno di rotazione sará parziale e sull'elemento o sugli elementi per i quali</div>
            <div>è attivata la casella della seconda colonna. Questo vincolo esterno parziale</div>
            <div>dipenderà dal coefficiente che si assegna ad ogni elemento o gruppo di elementi</div>
            <div>nella terza colonna della tabella.</div>
          </div>
        </div>
        <div className="flex-1" />
        <div className="h-[36px] bg-[#dfdccc] border-t-2 border-t-[#b8b4a4] flex items-center justify-between px-[6px] shrink-0">
          <Btn def t={<><u>A</u>ccettare</>} />
          <Btn t="Annullare" />
        </div>
      </Dialog>
      <Arrows />
    </div>
  );
}
